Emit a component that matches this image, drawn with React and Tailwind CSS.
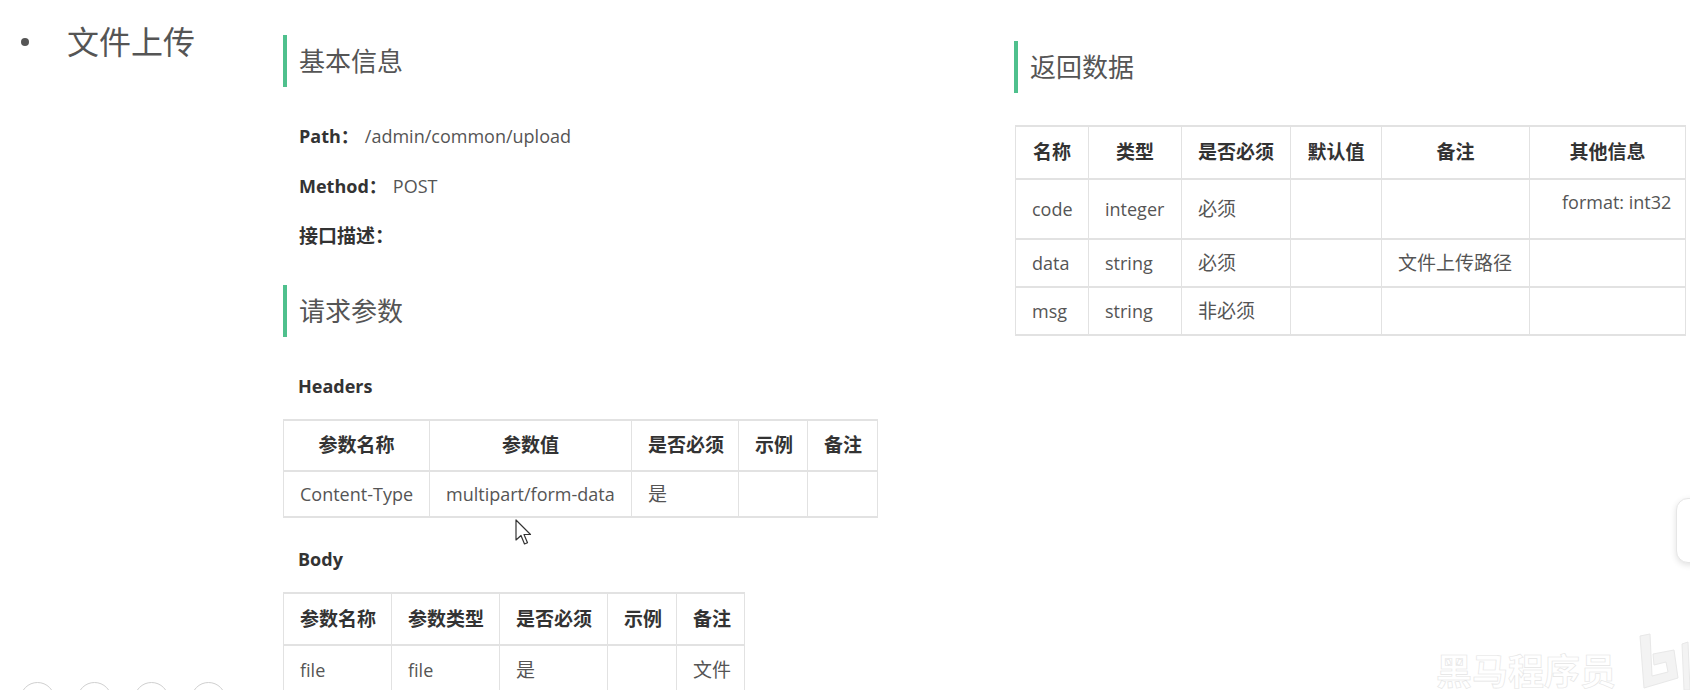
import React from 'react';

const FONT = "font-['Open_Sans','Noto_Sans_CJK_SC',sans-serif]";

const Heading = ({ children }) => (
  <div className="h-[52px] border-l-[4px] border-[#4fc08d] pl-[12px] flex items-center text-[26px] text-[#555]">
    {children}
  </div>
);

const DocTable = ({ width, cols, head, rows, headH, rowHs }) => (
  <table className={`${width} table-fixed border-collapse text-[18px] text-[#555]`}>
    <colgroup>
      {cols.map((c, i) => (
        <col key={i} className={c} />
      ))}
    </colgroup>
    <thead>
      <tr className={headH}>
        {head.map((h, i) => (
          <th key={i} className="border-x border-y-2 border-[#e2e2e2] px-4 text-center text-[19px] font-bold text-[#333] whitespace-nowrap">
            {h}
          </th>
        ))}
      </tr>
    </thead>
    <tbody>
      {rows.map((r, ri) => (
        <tr key={ri} className={rowHs[ri]}>
          {r.map((c, ci) => (
            <td key={ci} className="border-x border-y-2 border-[#e2e2e2] px-4 text-left whitespace-nowrap">
              {c}
            </td>
          ))}
        </tr>
      ))}
    </tbody>
  </table>
);

const Cjk = ({ children }) => <span className="text-[19px]">{children}</span>;

export default function App() {
  return (
    <div className={`${FONT} relative w-[1690px] h-[690px] overflow-hidden bg-white flex`}>
      {/* left: list item */}
      <div className="w-[283px] shrink-0 pt-[22px] pl-[21px]">
        <div className="flex items-center">
          <span className="w-[8px] h-[8px] rounded-full bg-[#555]" />
          <span className="ml-[38px] text-[32px] leading-[40px] text-[#555]">文件上传</span>
        </div>
      </div>

      {/* middle: basic info + request params */}
      <div className="w-[600px] shrink-0 pt-[35px]">
        <Heading>基本信息</Heading>
        <div className="mt-[24px] pl-[16px] text-[18px]">
          <p className="h-[50px] flex items-center">
            <span className="font-bold text-[#333]">Path：</span>
            <span className="ml-[6px] text-[#555]">/admin/common/upload</span>
          </p>
          <p className="h-[50px] flex items-center">
            <span className="font-bold text-[#333]">Method：</span>
            <span className="ml-[6px] text-[#555]">POST</span>
          </p>
          <p className="h-[50px] flex items-center">
            <span className="font-bold text-[#333] text-[19px]">接口描述：</span>
          </p>
        </div>
        <div className="mt-[24px]">
          <Heading>请求参数</Heading>
        </div>
        <p className="mt-[35px] h-[28px] pl-[15px] flex items-center font-bold text-[18px] text-[#333]">Headers</p>
        <div className="mt-[19px]">
          <DocTable
            width="w-[594px]"
            cols={['w-[146px]', 'w-[202px]', 'w-[107px]', 'w-[69px]', 'w-[70px]']}
            head={['参数名称', '参数值', '是否必须', '示例', '备注']}
            headH="h-[51px]"
            rowHs={['h-[46px]']}
            rows={[['Content-Type', 'multipart/form-data', <Cjk>是</Cjk>, '', '']]}
          />
        </div>
        <p className="mt-[27px] h-[28px] pl-[15px] flex items-center font-bold text-[18px] text-[#333]">Body</p>
        <div className="mt-[19px]">
          <DocTable
            width="w-[461px]"
            cols={['w-[108px]', 'w-[108px]', 'w-[108px]', 'w-[69px]', 'w-[68px]']}
            head={['参数名称', '参数类型', '是否必须', '示例', '备注']}
            headH="h-[52px]"
            rowHs={['h-[50px]']}
            rows={[['file', 'file', <Cjk>是</Cjk>, '', <Cjk>文件</Cjk>]]}
          />
        </div>
      </div>

      {/* right: response data */}
      <div className="ml-[131px] pt-[41px]">
        <Heading>返回数据</Heading>
        <div className="mt-[32px] pl-[1px]">
          <DocTable
            width="w-[670px]"
            cols={['w-[73px]', 'w-[93px]', 'w-[109px]', 'w-[91px]', 'w-[148px]', 'w-[156px]']}
            head={['名称', '类型', '是否必须', '默认值', '备注', '其他信息']}
            headH="h-[53px]"
            rowHs={['h-[60px]', 'h-[48px]', 'h-[48px]']}
            rows={[
              ['code', 'integer', <Cjk>必须</Cjk>, '', '', <div className="pl-4 pb-[13px]">format: int32</div>],
              ['data', 'string', <Cjk>必须</Cjk>, '', <Cjk>文件上传路径</Cjk>, ''],
              ['msg', 'string', <Cjk>非必须</Cjk>, '', '', ''],
            ]}
          />
        </div>
      </div>

      {/* mouse cursor */}
      <svg className="absolute left-[515px] top-[519px]" width="20" height="28" viewBox="0 0 20 28">
        <path d="M1 1 L1 21 L6 16.5 L9.5 25 L12.5 23.8 L9 15.5 L15.5 15.5 Z" fill="#fff" stroke="#333" strokeWidth="1.2" strokeLinejoin="round" />
      </svg>

      {/* bottom-left player buttons */}
      <div className="absolute left-[20px] top-[682px] flex gap-[22px]">
        <span className="w-[35px] h-[35px] rounded-full border border-[#d0d0d0] bg-white" />
        <span className="w-[35px] h-[35px] rounded-full border border-[#d0d0d0] bg-white" />
        <span className="w-[35px] h-[35px] rounded-full border border-[#d0d0d0] bg-white" />
        <span className="w-[35px] h-[35px] rounded-full border border-[#d0d0d0] bg-white" />
      </div>

      {/* right side floating tab */}
      <div className="absolute left-[1676px] top-[498px] w-[40px] h-[65px] rounded-[12px] border border-[#e6e6e6] bg-white shadow-[0_2px_6px_rgba(0,0,0,0.12)]" />

      {/* watermark */}
      <div className="absolute left-[1436px] top-[650px] text-[36px] font-bold leading-[38px] text-white [-webkit-text-stroke:0.6px_#e4e4e4] font-['Noto_Sans_CJK_SC',sans-serif]">
        黑马程序员
      </div>
      <svg className="absolute left-[1636px] top-[632px]" width="54" height="58" viewBox="0 0 54 58">
        <path d="M4 4 L14 2 L16 44 L32 40 L30 30 L18 33 L17 22 L38 18 L42 46 L8 56 Z" fill="#f3f3f3" stroke="#e8e8e8" strokeWidth="1" />
        <path d="M46 12 L52 10 L54 58 L48 58 Z" fill="#f3f3f3" stroke="#e8e8e8" strokeWidth="1" />
      </svg>
    </div>
  );
}
